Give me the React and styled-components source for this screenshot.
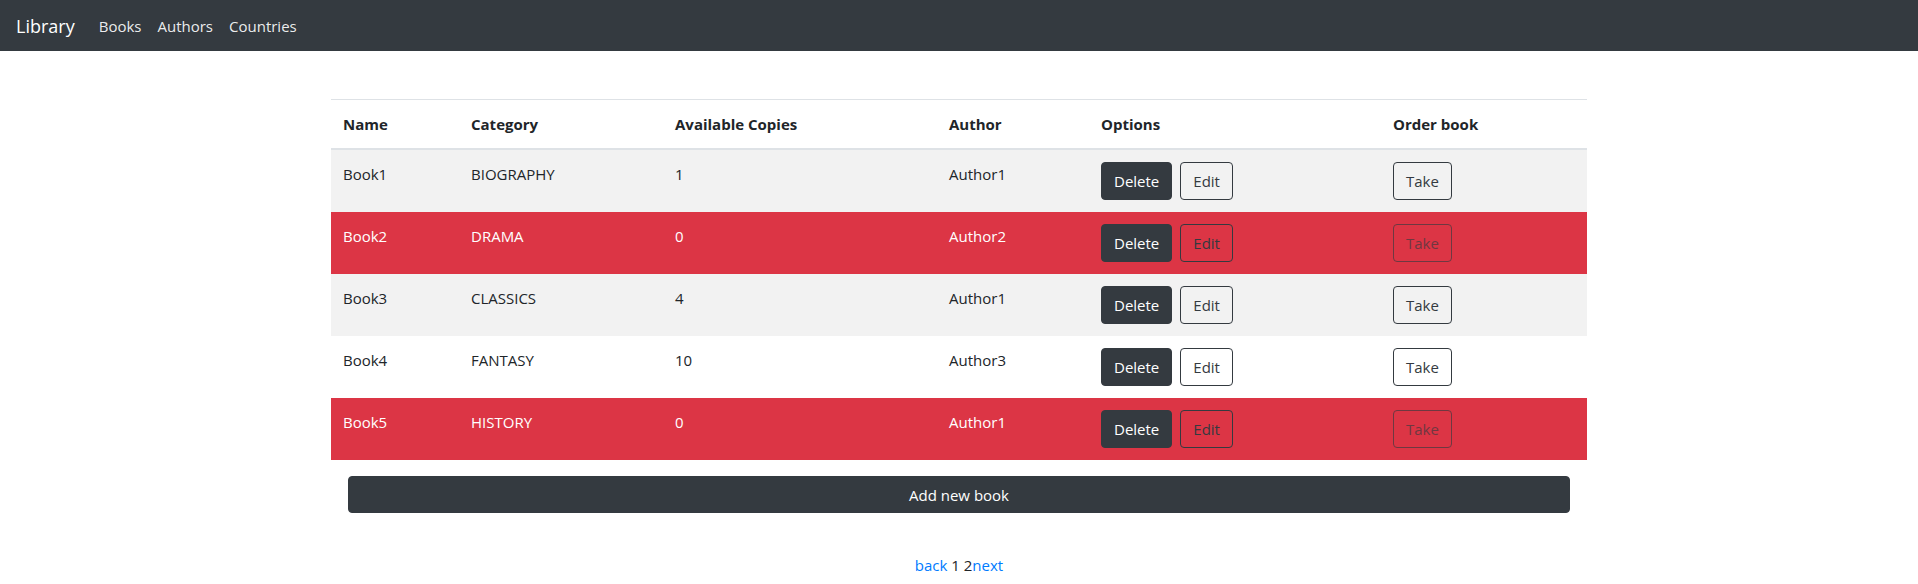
import React from 'react'
import styled, { createGlobalStyle, css } from 'styled-components'

const GlobalStyle = createGlobalStyle`
  * { box-sizing: border-box; }
  body {
    margin: 0;
    font-family: "Open Sans", "Noto Sans", sans-serif;
    font-size: 15px;
    line-height: 24px;
    color: #212529;
    background: #fff;
  }
`

const Navbar = styled.nav`
  display: flex;
  align-items: center;
  height: 51px;
  padding: 0 16px;
  background: #343a40;
`

const Brand = styled.a`
  font-size: 18px;
  color: #fff;
  margin-right: 16px;
  text-decoration: none;
`

const NavLink = styled.a`
  padding: 0 8px;
  font-size: 15px;
  color: rgba(255, 255, 255, 0.92);
  text-decoration: none;
`

const Container = styled.main`
  width: 1256px;
  margin: 48px auto 0;
`

const Table = styled.table`
  width: 100%;
  border-collapse: collapse;
  table-layout: fixed;
  border-top: 1px solid #dee2e6;
`

const Th = styled.th`
  text-align: left;
  padding: 12px;
  font-weight: 700;
  border-bottom: 2px solid #dee2e6;
`

const Row = styled.tr`
  background: ${p => (p.$danger ? '#dc3545' : p.$striped ? '#f2f2f2' : '#fff')};
  color: ${p => (p.$danger ? '#fff' : '#212529')};
  & + & td { border-top: 1px solid #dee2e6; }
`

const Td = styled.td`
  padding: 12px;
  vertical-align: top;
`

const Actions = styled.div`
  display: flex;
  gap: 8px;
`

const Button = styled.button`
  font: inherit;
  height: 38px;
  padding: 0 12px;
  border-radius: 4px;
  cursor: pointer;
  ${p =>
    p.$dark
      ? css`
          background: #343a40;
          border: 1px solid #343a40;
          color: #fff;
        `
      : css`
          background: transparent;
          border: 1px solid #343a40;
          color: #343a40;
        `}
  &:disabled { opacity: 0.65; cursor: default; }
`

const AddButton = styled(Button)`
  display: block;
  width: calc(100% - 34px);
  height: 37px;
  margin: 16px 17px 0;
`

const Pager = styled.div`
  margin-top: 40px;
  text-align: center;
`

const PageLink = styled.a`
  color: #007bff;
  text-decoration: none;
`

const cols = [128, 204, 274, 152, 292, 206]

const books = [
  { name: 'Book1', category: 'BIOGRAPHY', copies: 1, author: 'Author1' },
  { name: 'Book2', category: 'DRAMA', copies: 0, author: 'Author2' },
  { name: 'Book3', category: 'CLASSICS', copies: 4, author: 'Author1' },
  { name: 'Book4', category: 'FANTASY', copies: 10, author: 'Author3' },
  { name: 'Book5', category: 'HISTORY', copies: 0, author: 'Author1' },
]

const App = () => {
  return (
    <>
      <GlobalStyle />
      <Navbar>
        <Brand href="#">Library</Brand>
        <NavLink href="#">Books</NavLink>
        <NavLink href="#">Authors</NavLink>
        <NavLink href="#">Countries</NavLink>
      </Navbar>
      <Container>
        <Table>
          <colgroup>
            {cols.map((w, i) => (
              <col key={i} style={{ width: w }} />
            ))}
          </colgroup>
          <thead>
            <tr>
              <Th>Name</Th>
              <Th>Category</Th>
              <Th>Available Copies</Th>
              <Th>Author</Th>
              <Th>Options</Th>
              <Th>Order book</Th>
            </tr>
          </thead>
          <tbody>
            {books.map((b, i) => (
              <Row key={b.name} $danger={b.copies === 0} $striped={i % 2 === 0}>
                <Td>{b.name}</Td>
                <Td>{b.category}</Td>
                <Td>{b.copies}</Td>
                <Td>{b.author}</Td>
                <Td>
                  <Actions>
                    <Button $dark>Delete</Button>
                    <Button>Edit</Button>
                  </Actions>
                </Td>
                <Td>
                  <Button disabled={b.copies === 0}>Take</Button>
                </Td>
              </Row>
            ))}
          </tbody>
        </Table>
        <AddButton $dark>Add new book</AddButton>
        <Pager>
          <PageLink href="#">back</PageLink> 1 2<PageLink href="#">next</PageLink>
        </Pager>
      </Container>
    </>
  )
}

export default App
